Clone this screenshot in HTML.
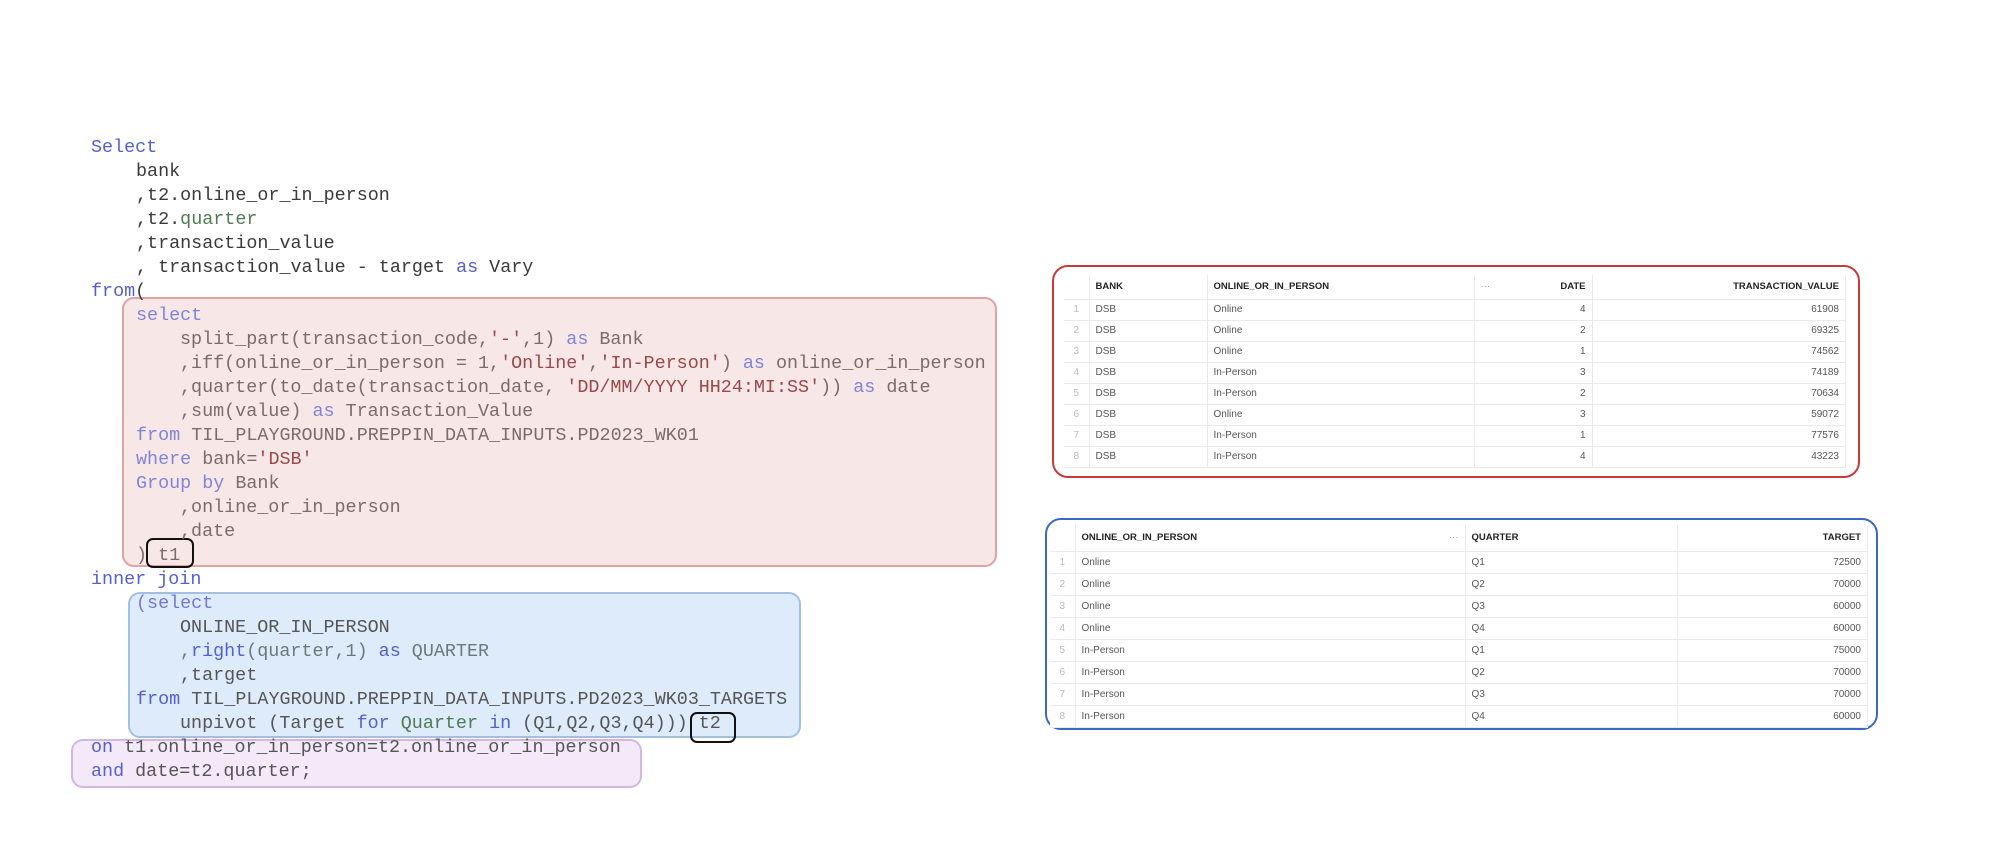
<!DOCTYPE html>
<html><head><meta charset="utf-8"><style>
body{margin:0;width:2000px;height:849px;background:#fff;position:relative;overflow:hidden;font-family:"Liberation Mono",monospace}
.l{position:absolute;font-size:18.4px;line-height:24px;white-space:pre;color:#3a3a3a}
.k{color:#5560cc}.g{color:#4e7a55}.s{color:#9a4848}
.r .l,.r{color:#7a6c6c}
.box{position:absolute;border-radius:12px;box-sizing:border-box}
.tb{position:absolute;font-family:"Liberation Sans",sans-serif;font-size:10px;color:#555;border-collapse:collapse;background:#fff}
.tb td{border-bottom:1px solid #eaeaea;border-right:1px solid #eaeaea;padding:0 6px;white-space:nowrap}
.tb tr:first-child td{font-weight:bold;color:#222;font-size:9.5px}
.tb td.n{color:#bbb;text-align:center;padding:0}
.tb td.rt{text-align:right}
</style></head><body>
<div class="box" style="left:122px;top:297px;width:875px;height:270px;background:#f8e7e7;border:2px solid #dfa3a3"></div>
<div class="box" style="left:128px;top:592px;width:673px;height:146px;background:#deebfa;border:2px solid #a5bfe2"></div>
<div class="box" style="left:71px;top:739px;width:571px;height:49px;background:#f4e9f9;border:2px solid #d4b6e2"></div>
<div class="box" style="left:146px;top:538px;width:48px;height:30px;border:2px solid #111;border-radius:7px"></div>
<div class="box" style="left:690px;top:712px;width:46px;height:31px;border:2px solid #111;border-radius:7px"></div>

<div class="l k" style="left:91px;top:136px">Select</div>
<div class="l" style="left:136px;top:160px">bank</div>
<div class="l" style="left:136px;top:184px">,t2.online_or_in_person</div>
<div class="l" style="left:136px;top:208px">,t2.<span class="g">quarter</span></div>
<div class="l" style="left:136px;top:232px">,transaction_value</div>
<div class="l" style="left:136px;top:256px">, transaction_value - target <span class="k">as</span> Vary</div>
<div class="l" style="left:91px;top:280px"><span class="k">from</span>(</div>
<div class="r">
<div class="l" style="left:136px;top:304px"><span class="k" style="color:#7f84d8">select</span></div>
<div class="l" style="left:180px;top:328px">split_part(transaction_code,<span class="s">'-'</span>,1) <span class="k" style="color:#7f84d8">as</span> Bank</div>
<div class="l" style="left:180px;top:352px">,iff(online_or_in_person = 1,<span class="s">'Online'</span>,<span class="s">'In-Person'</span>) <span class="k" style="color:#7f84d8">as</span> online_or_in_person</div>
<div class="l" style="left:180px;top:376px">,quarter(to_date(transaction_date, <span class="s">'DD/MM/YYYY HH24:MI:SS'</span>)) <span class="k" style="color:#7f84d8">as</span> date</div>
<div class="l" style="left:180px;top:400px">,sum(value) <span class="k" style="color:#7f84d8">as</span> Transaction_Value</div>
<div class="l" style="left:136px;top:424px"><span class="k" style="color:#7f84d8">from</span> TIL_PLAYGROUND.PREPPIN_DATA_INPUTS.PD2023_WK01</div>
<div class="l" style="left:136px;top:448px"><span class="k" style="color:#7f84d8">where</span> bank=<span class="s">'DSB'</span></div>
<div class="l" style="left:136px;top:472px"><span class="k" style="color:#7f84d8">Group by</span> Bank</div>
<div class="l" style="left:180px;top:496px">,online_or_in_person</div>
<div class="l" style="left:180px;top:520px">,date</div>
<div class="l" style="left:136px;top:544px">) t1</div>
</div>
<div class="l k" style="left:91px;top:568px">inner join</div>
<div class="l" style="left:136px;top:592px;color:#6a7078"><span class="k" style="color:#7478d4">(select</span></div>
<div class="l" style="left:180px;top:616px;color:#555">ONLINE_OR_IN_PERSON</div>
<div class="l" style="left:180px;top:640px;color:#6a7a78">,<span class="k">right</span>(quarter,1) <span class="k">as</span> QUARTER</div>
<div class="l" style="left:180px;top:664px;color:#555">,target</div>
<div class="l" style="left:136px;top:688px;color:#555"><span class="k">from</span> TIL_PLAYGROUND.PREPPIN_DATA_INPUTS.PD2023_WK03_TARGETS</div>
<div class="l" style="left:180px;top:712px;color:#555">unpivot (Target <span class="k">for</span> <span class="g">Quarter</span> <span class="k">in</span> (Q1,Q2,Q3,Q4))) t2</div>
<div class="l" style="left:91px;top:736px;color:#555"><span class="k">on</span> t1.online_or_in_person=t2.online_or_in_person</div>
<div class="l" style="left:91px;top:760px;color:#555"><span class="k">and</span> date=t2.quarter;</div>

<div class="box" style="left:1052px;top:265px;width:808px;height:213px;border:2.5px solid #c83a3a;border-radius:16px"></div>
<table class="tb" style="left:1064px;top:275px;width:782px">
<colgroup><col style="width:25px"><col style="width:118px"><col style="width:267px"><col style="width:118px"><col></colgroup>
<tr style="height:24px"><td class="n"></td><td>BANK</td><td>ONLINE_OR_IN_PERSON</td><td class="rt"><span style="float:left;color:#999;font-weight:normal">···</span>DATE</td><td class="rt">TRANSACTION_VALUE</td></tr>
<tr style="height:21px"><td class="n">1</td><td>DSB</td><td>Online</td><td class="rt">4</td><td class="rt">61908</td></tr>
<tr style="height:21px"><td class="n">2</td><td>DSB</td><td>Online</td><td class="rt">2</td><td class="rt">69325</td></tr>
<tr style="height:21px"><td class="n">3</td><td>DSB</td><td>Online</td><td class="rt">1</td><td class="rt">74562</td></tr>
<tr style="height:21px"><td class="n">4</td><td>DSB</td><td>In-Person</td><td class="rt">3</td><td class="rt">74189</td></tr>
<tr style="height:21px"><td class="n">5</td><td>DSB</td><td>In-Person</td><td class="rt">2</td><td class="rt">70634</td></tr>
<tr style="height:21px"><td class="n">6</td><td>DSB</td><td>Online</td><td class="rt">3</td><td class="rt">59072</td></tr>
<tr style="height:21px"><td class="n">7</td><td>DSB</td><td>In-Person</td><td class="rt">1</td><td class="rt">77576</td></tr>
<tr style="height:21px"><td class="n">8</td><td>DSB</td><td>In-Person</td><td class="rt">4</td><td class="rt">43223</td></tr>
</table>

<div class="box" style="left:1045px;top:518px;width:833px;height:212px;border:2.5px solid #3a68c2;border-radius:16px"></div>
<table class="tb" style="left:1050px;top:525px;width:818px">
<colgroup><col style="width:25px"><col style="width:390px"><col style="width:212px"><col></colgroup>
<tr style="height:26px"><td class="n"></td><td>ONLINE_OR_IN_PERSON<span style="float:right;color:#999;font-weight:normal">···</span></td><td>QUARTER</td><td class="rt">TARGET</td></tr>
<tr style="height:22px"><td class="n">1</td><td>Online</td><td>Q1</td><td class="rt">72500</td></tr>
<tr style="height:22px"><td class="n">2</td><td>Online</td><td>Q2</td><td class="rt">70000</td></tr>
<tr style="height:22px"><td class="n">3</td><td>Online</td><td>Q3</td><td class="rt">60000</td></tr>
<tr style="height:22px"><td class="n">4</td><td>Online</td><td>Q4</td><td class="rt">60000</td></tr>
<tr style="height:22px"><td class="n">5</td><td>In-Person</td><td>Q1</td><td class="rt">75000</td></tr>
<tr style="height:22px"><td class="n">6</td><td>In-Person</td><td>Q2</td><td class="rt">70000</td></tr>
<tr style="height:22px"><td class="n">7</td><td>In-Person</td><td>Q3</td><td class="rt">70000</td></tr>
<tr style="height:22px"><td class="n">8</td><td>In-Person</td><td>Q4</td><td class="rt">60000</td></tr>
</table>
</body></html>
